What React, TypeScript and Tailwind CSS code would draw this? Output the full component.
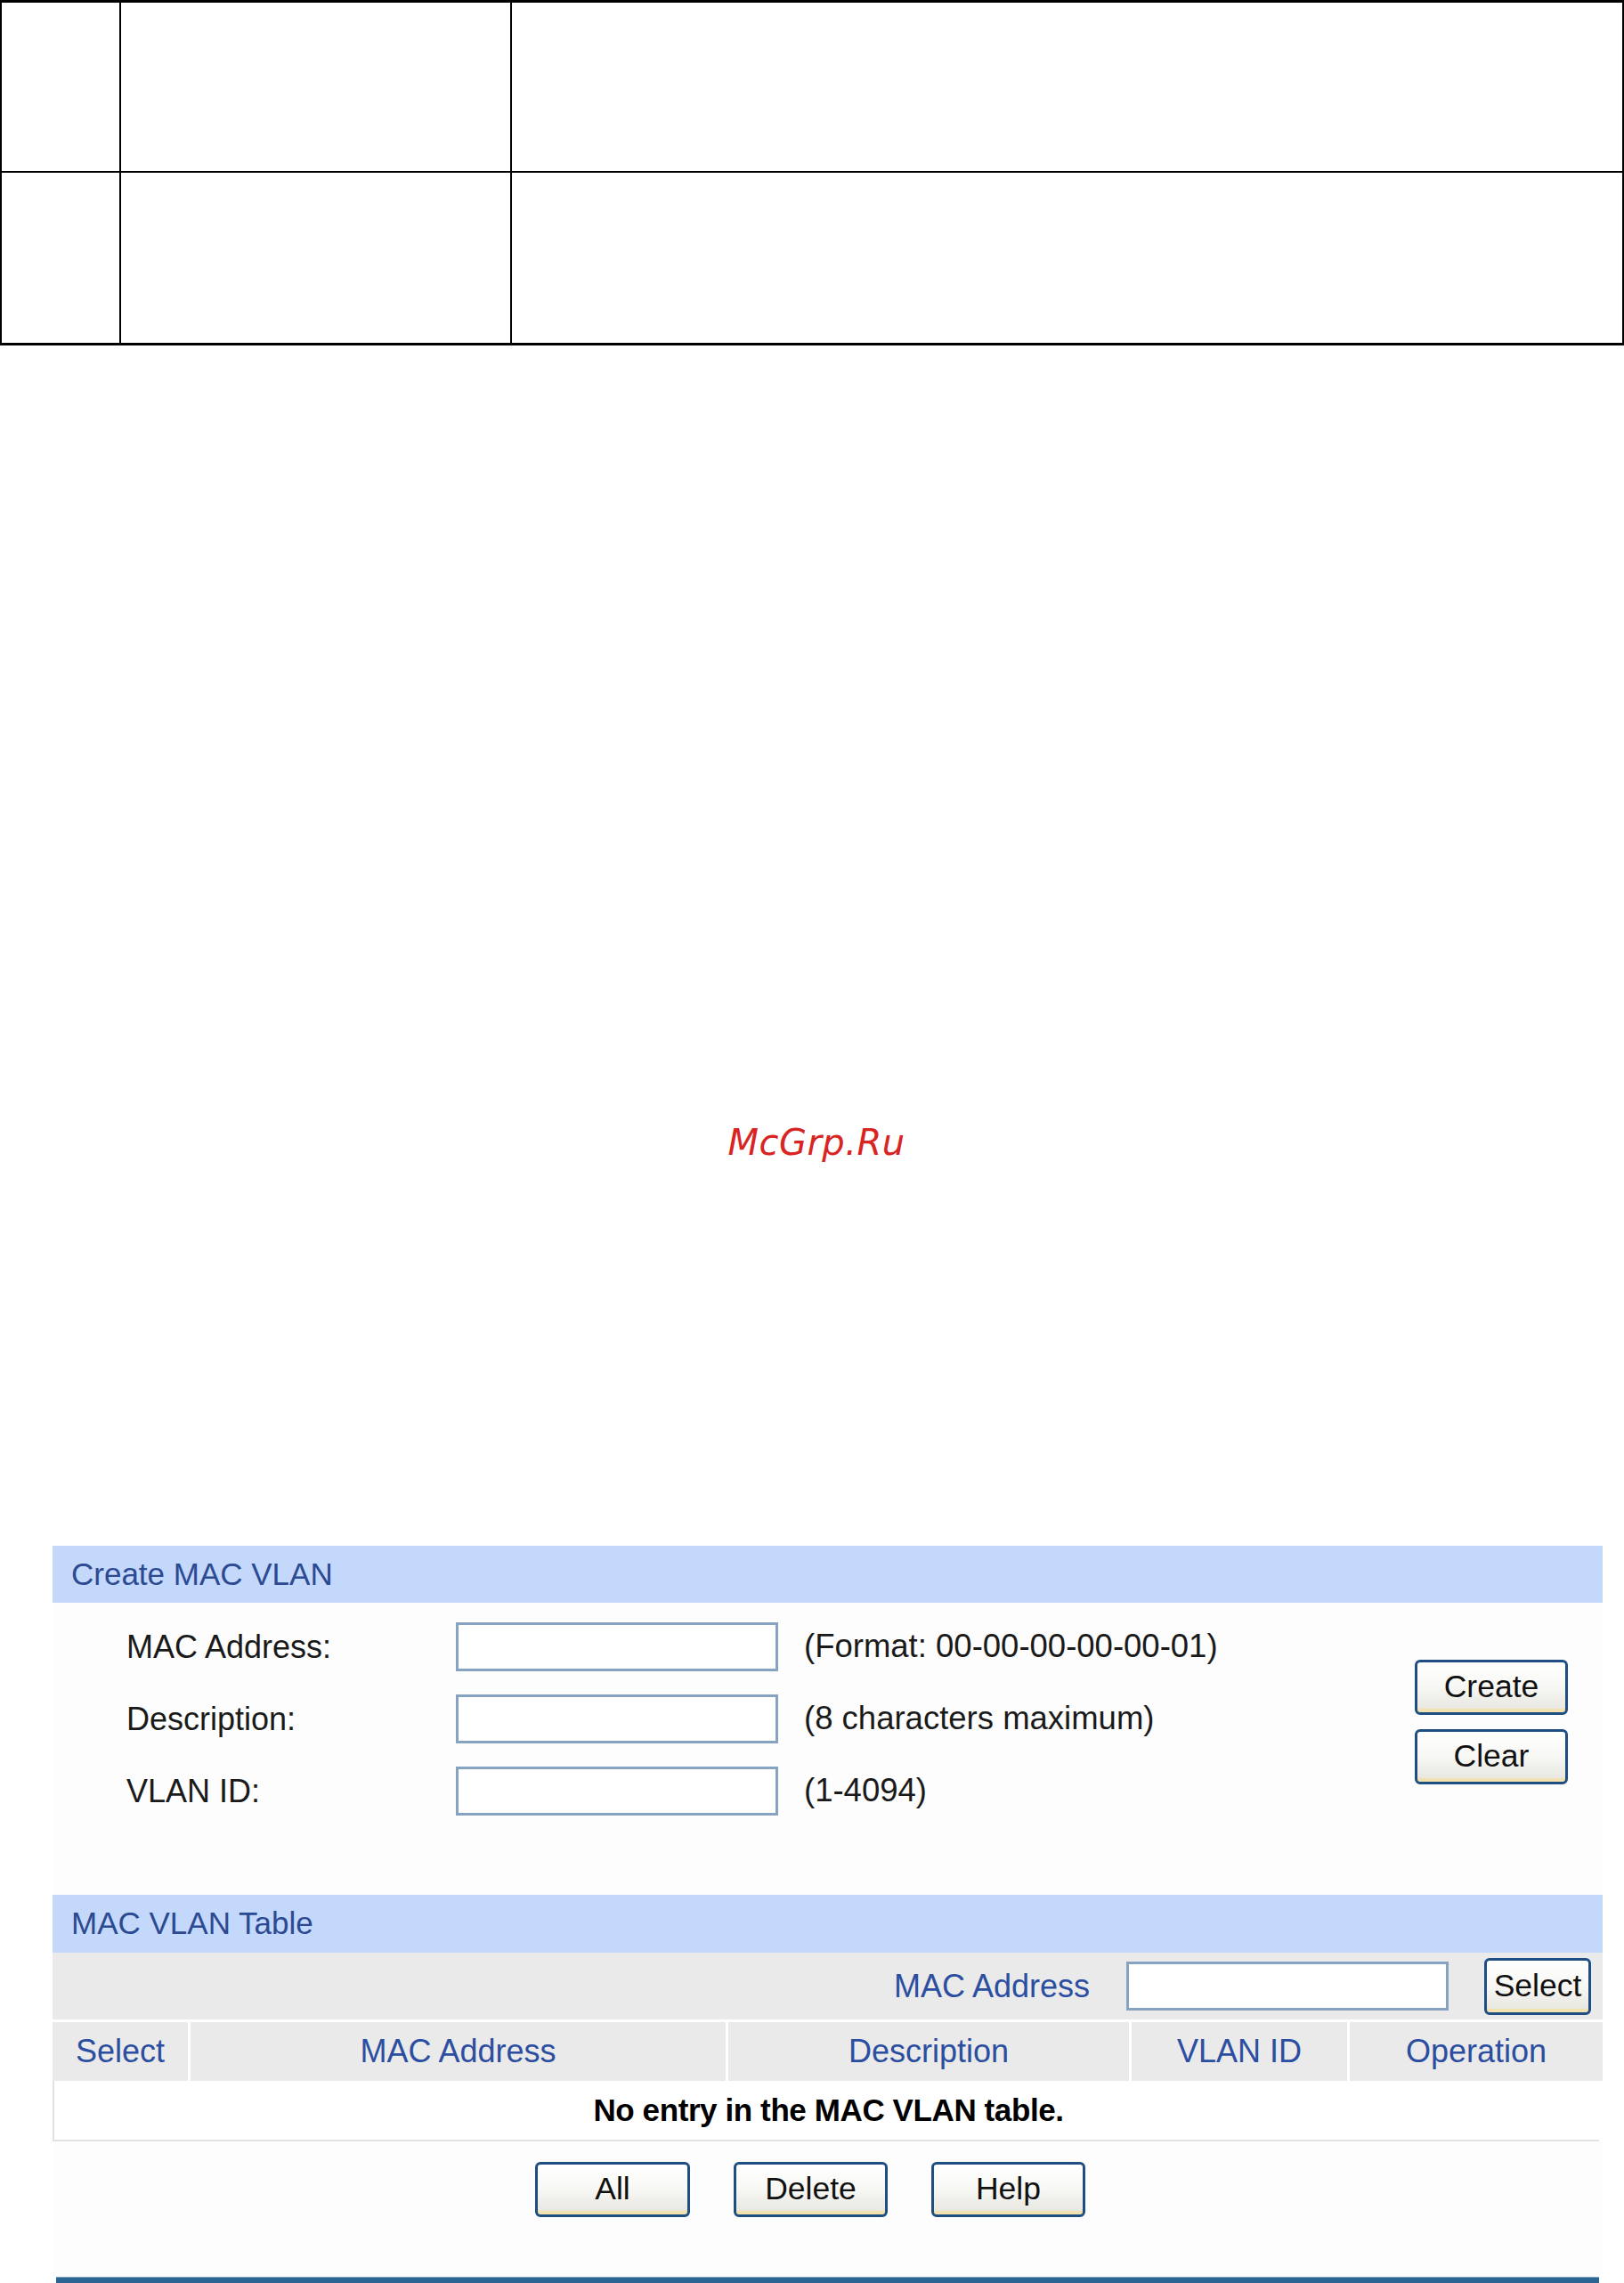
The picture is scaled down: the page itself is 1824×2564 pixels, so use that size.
import React from "react";

const font = "font-['Liberation_Sans',Arial,sans-serif]";

const XpButton = ({ label, className }: { label: string; className: string }) => (
  <button
    className={`${className} flex items-center justify-center rounded-[6px] border-[3px] border-[#1f4e82] bg-gradient-to-b from-white via-[#f7f7f4] to-[#e6e5de] text-[35.5px] leading-none text-[#111] shadow-[inset_0_-4px_0_#f2e2b0]`}
  >
    {label}
  </button>
);

const TextBox = ({ className }: { className: string }) => (
  <div className={`${className} border-[3px] border-[#87a3c2] bg-white`} />
);

const columns = [
  { name: "Select", w: "w-[152px]" },
  { name: "MAC Address", w: "w-[604px]" },
  { name: "Description", w: "w-[453px]" },
  { name: "VLAN ID", w: "w-[245px]" },
  { name: "Operation", w: "flex-1" },
];

const fields = [
  { label: "MAC Address:", hint: "(Format: 00-00-00-00-00-01)" },
  { label: "Description:", hint: "(8 characters maximum)" },
  { label: "VLAN ID:", hint: "(1-4094)" },
];

export default function App() {
  return (
    <div className={`w-[1824px] h-[2564px] overflow-hidden bg-white ${font}`}>
      {/* empty ruled table from the manual page above */}
      <div className="w-[1824px] h-[388px] border-t-[3px] border-l-2 border-r-2 border-b-[3px] border-black grid grid-cols-[134px_439px_1fr] grid-rows-[191px_191px]">
        <div className="border-r-2 border-b-2 border-black" />
        <div className="border-r-2 border-b-2 border-black" />
        <div className="border-b-2 border-black" />
        <div className="border-r-2 border-black" />
        <div className="border-r-2 border-black" />
        <div />
      </div>

      {/* watermark */}
      <div className="mt-[875px] h-[40px] flex justify-center pl-[10px]">
        <span className="font-['DejaVu_Sans',sans-serif] italic text-[40px] leading-[40px] text-[#d92424] tracking-[0.5px]">
          McGrp.Ru
        </span>
      </div>

      {/* switch web UI */}
      <div className="mt-[433px] ml-[59px] w-[1741px]">
        <div className="h-[64px] bg-[#c4d8fb] flex items-center pl-[21px] text-[35px] text-[#2c4a92]">
          Create MAC VLAN
        </div>

        <div className="h-[328px] bg-[#fdfdfd] flex pr-[39px]">
          <div className="flex-1 flex flex-col gap-[26px] pt-[22px] pl-[83px]">
            {fields.map((f) => (
              <div key={f.label} className="h-[55px] flex items-center">
                <span className="w-[370px] text-[36px] text-[#1a1a1a]">{f.label}</span>
                <TextBox className="w-[362px] h-[55px]" />
                <span className="ml-[29px] text-[36.5px] text-[#1a1a1a]">{f.hint}</span>
              </div>
            ))}
          </div>
          <div className="flex flex-col gap-[16px] pt-[64px]">
            <XpButton label="Create" className="w-[172px] h-[62px]" />
            <XpButton label="Clear" className="w-[172px] h-[62px]" />
          </div>
        </div>

        <div className="h-[65px] bg-[#c4d8fb] flex items-center pl-[21px] text-[35px] text-[#2c4a92]">
          MAC VLAN Table
        </div>

        <div className="h-[75px] bg-[#eaeaea] flex items-center justify-end pr-[13px]">
          <span className="text-[36px] text-[#2c4ea0]">MAC Address</span>
          <TextBox className="ml-[41px] w-[362px] h-[55px]" />
          <XpButton label="Select" className="ml-[40px] w-[120px] h-[64px]" />
        </div>

        <div className="mt-[3px] h-[66px] flex bg-[#eaeaea]">
          {columns.map((c, i) => (
            <div
              key={c.name}
              className={`${c.w} flex items-center justify-center text-[36px] text-[#2c4ea0] ${i > 0 ? "border-l-[3px] border-white" : ""}`}
            >
              {c.name}
            </div>
          ))}
        </div>

        <div className="h-[68px] bg-white border-l-2 border-b-2 border-[#e2e2e2] mr-[4px] flex items-center justify-center pl-[4px]">
          <span className="font-bold text-[35px] tracking-[-0.4px] text-black">
            No entry in the MAC VLAN table.
          </span>
        </div>

        <div className="h-[152px] bg-[#fdfdfd] flex gap-[49px] pl-[542px] pt-[23px]">
          <XpButton label="All" className="w-[174px] h-[62px]" />
          <XpButton label="Delete" className="w-[173px] h-[62px]" />
          <XpButton label="Help" className="w-[173px] h-[62px]" />
        </div>

        <div className="ml-[4px] mr-[4px] h-[10px] bg-[#2b6592] border-t border-[#7fa6c6]" />
      </div>
    </div>
  );
}
